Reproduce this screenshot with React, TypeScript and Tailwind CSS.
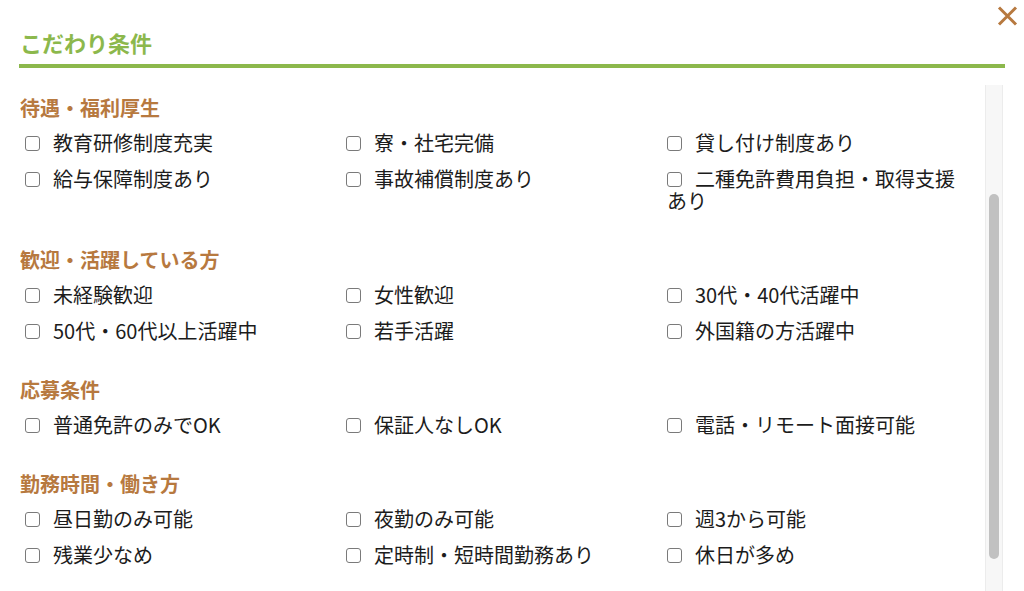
import React from "react";

const sections: { title: string; items: string[] }[] = [
  {
    title: "待遇・福利厚生",
    items: [
      "教育研修制度充実",
      "寮・社宅完備",
      "貸し付け制度あり",
      "給与保障制度あり",
      "事故補償制度あり",
      "二種免許費用負担・取得支援あり",
    ],
  },
  {
    title: "歓迎・活躍している方",
    items: [
      "未経験歓迎",
      "女性歓迎",
      "30代・40代活躍中",
      "50代・60代以上活躍中",
      "若手活躍",
      "外国籍の方活躍中",
    ],
  },
  {
    title: "応募条件",
    items: ["普通免許のみでOK", "保証人なしOK", "電話・リモート面接可能"],
  },
  {
    title: "勤務時間・働き方",
    items: [
      "昼日勤のみ可能",
      "夜勤のみ可能",
      "週3から可能",
      "残業少なめ",
      "定時制・短時間勤務あり",
      "休日が多め",
    ],
  },
];

export default function App() {
  return (
    <div
      className="w-[1024px] h-[591px] overflow-hidden bg-white relative text-[#1c1c1c]"
      style={{ fontFamily: '"Noto Sans CJK JP", "Noto Sans", sans-serif' }}
    >
      <button className="absolute top-[5px] right-[6px] w-[22px] h-[22px] flex items-center justify-center">
        <svg width="21" height="20" viewBox="0 0 21 20">
          <path d="M2 1.5 L19 18.5 M19 1.5 L2 18.5" stroke="#b7793f" strokeWidth="3" strokeLinecap="butt" />
        </svg>
      </button>
      <div className="px-[19px] pt-[28px]">
        <div className="pl-[1px] pb-[8px] border-b-[4px] border-[#8cb84c]">
          <h1 className="text-[22px] leading-[28px] font-bold text-[#8cb84c]">
            こだわり条件
          </h1>
        </div>
      </div>
      <div className="flex mt-[17px] pl-[20px] pr-[21px] h-[506px]">
        <div className="flex-1 overflow-hidden pt-[11px]">
          {sections.map((s) => (
            <div key={s.title} className="mb-[36px]">
              <h2 className="text-[20px] leading-[24px] font-bold text-[#b7793f]">
                {s.title}
              </h2>
              <div className="grid grid-cols-[321px_321px_1fr] gap-y-[14px] pl-[5px] mt-[12px]">
                {s.items.map((it) => (
                  <label key={it} className="pr-[20px] text-[20px] leading-[22px]">
                    <span className="inline-block w-[15px] h-[15px] border border-[#7a7a7a] rounded-[3px] bg-white align-middle relative -top-[2px] mr-[13px]"></span>
                    {it}
                  </label>
                ))}
              </div>
            </div>
          ))}
        </div>
        <div className="w-[18px] bg-[#f7f7f7] border-x border-[#ececec] flex justify-center">
          <div className="w-[10px] h-[365px] mt-[109px] rounded-full bg-[#c1c1c1]"></div>
        </div>
      </div>
    </div>
  );
}
